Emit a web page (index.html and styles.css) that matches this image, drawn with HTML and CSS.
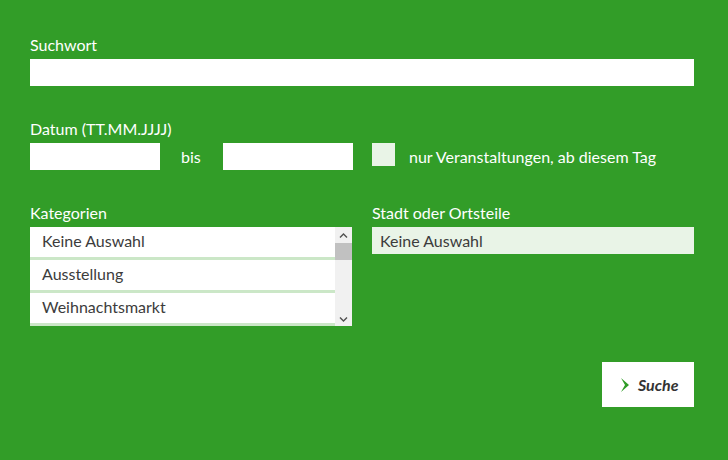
FILE: index.html
```html
<!DOCTYPE html>
<html lang="de">

<head>
    <meta charset="UTF-8">
    <meta name="viewport" content="width=device-width, initial-scale=1.0">
    <title>Veranstaltungssuche</title>
    <link rel="stylesheet" href="styles.css">
</head>

<body>
    <form class="search-form">

        <!-- Suchwort -->
        <div class="form-section">
            <label class="field-label" for="suchwort">Suchwort</label>
            <input type="text" id="suchwort" class="text-input full">
        </div>

        <!-- Datum -->
        <div class="form-section">
            <label class="field-label" for="datum-von">Datum (TT.MM.JJJJ)</label>
            <div class="date-row">
                <input type="text" id="datum-von" class="text-input date">
                <span class="bis">bis</span>
                <input type="text" id="datum-bis" class="text-input date">
                <span class="check-box"></span>
                <span class="check-label">nur Veranstaltungen, ab diesem Tag</span>
            </div>
        </div>

        <!-- Kategorien / Stadt -->
        <div class="form-section columns">
            <div class="column">
                <div class="field-label">Kategorien</div>
                <div class="list-box">
                    <ul class="list-items">
                        <li>Keine Auswahl</li>
                        <li>Ausstellung</li>
                        <li>Weihnachtsmarkt</li>
                    </ul>
                    <div class="scrollbar">
                        <svg class="scroll-arrow" width="17" height="14" viewBox="0 0 17 14">
                            <path d="M5 8.5 L8.5 5 L12 8.5" fill="none" stroke="#505050" stroke-width="1.4"/>
                        </svg>
                        <div class="scroll-thumb"></div>
                        <div class="scroll-track"></div>
                        <svg class="scroll-arrow" width="17" height="14" viewBox="0 0 17 14">
                            <path d="M5 5.5 L8.5 9 L12 5.5" fill="none" stroke="#505050" stroke-width="1.4"/>
                        </svg>
                    </div>
                </div>
            </div>
            <div class="column">
                <div class="field-label">Stadt oder Ortsteile</div>
                <div class="select-box">Keine Auswahl</div>
            </div>
        </div>

        <!-- Suche -->
        <div class="button-row">
            <button type="button" class="submit-btn">
                <svg width="10" height="16" viewBox="0 0 10 16">
                    <path d="M1 1 L9 8 L1 15 L5 8 Z" fill="#2e9c26"/>
                </svg>
                Suche
            </button>
        </div>

    </form>
</body>

</html>
```

FILE: styles.css
```css
body {
    margin: 0;
    background-color: #329d28;
    font-family: Lato, "Open Sans", sans-serif;
    font-size: 16px;
    color: #ffffff;
}

.search-form {
    width: 664px;
    padding: 35px 34px 0 30px;
}

.form-section {
    margin-bottom: 33px;
}

.field-label {
    display: block;
    line-height: 19px;
    margin-bottom: 5px;
}

.text-input {
    display: block;
    height: 27px;
    border: none;
    padding: 0 8px;
    box-sizing: border-box;
    background-color: #ffffff;
    font-family: inherit;
    font-size: 16px;
}

.text-input.full {
    width: 100%;
}

.date-row {
    display: flex;
    align-items: flex-start;
}

.text-input.date {
    width: 130px;
}

.bis {
    width: 63px;
    box-sizing: border-box;
    padding-left: 21px;
    line-height: 27px;
}

.check-box {
    width: 23px;
    height: 23px;
    margin-left: 19px;
    background-color: #e9f4e7;
}

.check-label {
    line-height: 27px;
    margin-left: 14px;
}

.columns {
    display: flex;
    gap: 20px;
    margin-bottom: 36px;
}

.column {
    flex: 1;
}

.list-box {
    display: flex;
    height: 99px;
    background-color: #ffffff;
    overflow: hidden;
}

.list-items {
    flex: 1;
    list-style: none;
    margin: 0;
    padding: 0;
}

.list-items li {
    height: 30px;
    line-height: 28px;
    padding-left: 12px;
    border-bottom: 3px solid #cbe7c7;
    color: #3c3c3c;
}

.scrollbar {
    width: 17px;
    display: flex;
    flex-direction: column;
    background-color: #f1f1f1;
}

.scroll-arrow {
    display: block;
    flex: none;
    margin-top: 2px;
}

.scroll-thumb {
    height: 17px;
    background-color: #c1c1c1;
}

.scroll-track {
    flex: 1;
}

.select-box {
    height: 27px;
    line-height: 27px;
    padding-left: 8px;
    background-color: #e9f4e7;
    color: #3c3c3c;
}

.button-row {
    display: flex;
    justify-content: flex-end;
}

.submit-btn {
    display: flex;
    align-items: center;
    gap: 8px;
    width: 92px;
    height: 45px;
    padding: 0 0 0 18px;
    border: none;
    background-color: #ffffff;
    color: #333333;
    font-family: Lato, sans-serif;
    font-size: 16px;
    font-weight: bold;
    font-style: italic;
    cursor: pointer;
}
```
